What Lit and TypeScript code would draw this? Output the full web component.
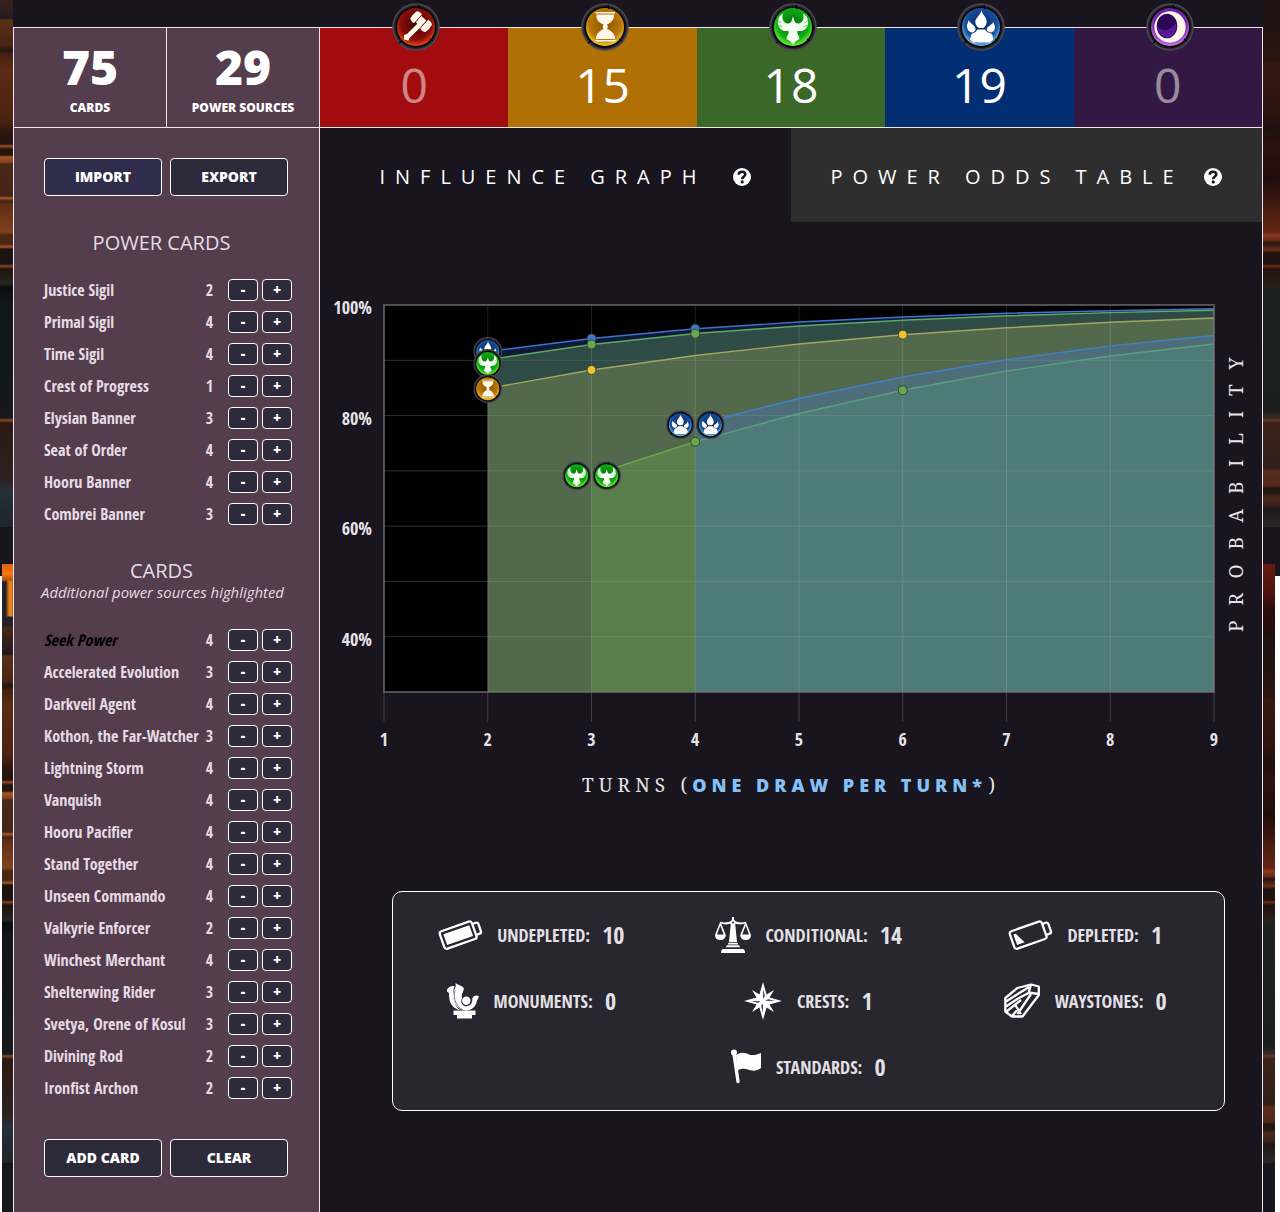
import { LitElement, html, svg, css } from "lit";
import { customElement, property } from "lit/decorators.js";

type Faction = "fire" | "time" | "justice" | "primal" | "shadow";

const ORB_COLORS: Record<Faction, [string, string, string]> = {
  fire: ["#ff4a22", "#8c0e08", "#3c0504"],
  time: ["#ffd23a", "#b87605", "#8a5200"],
  justice: ["#7dff3a", "#0fae14", "#066a0c"],
  primal: ["#7cccff", "#174f9c", "#08245c"],
  shadow: ["#e58cf8", "#6f22a8", "#3a0a66"],
};

const GLYPHS: Record<Faction, unknown> = {
  fire: svg`<g fill="#fff8ea">
    <path d="M26 20 L29.500 23.500 L19.500 33 L17.500 35 L16.500 37.500 L12 36.500 L12 32 L15 31 Z"/>
    <g transform="rotate(42 29.5 18.5)">
      <path d="M19 14 Q22 11.500 25 13 V24.500 Q22 26 19 23.500 Q18 19 19 14 Z M25.800 14.500 H32.500 V23 H25.800 Z M33.300 13 Q37 11.500 39.500 14 Q40.800 19 39.500 23.500 Q37 26 33.300 24.500 Z"/>
    </g></g>`,
  time: svg`<path fill="#fff8ea" d="M14.500 9 H34 V10.500 H14.500 Z M15.500 11.500 H33 C33.500 17 29 20.500 26 21.500 L27 24 L26 26 C31 28 34.500 32 34 36 H15 C14.800 32 18 28 22.500 26 L21.500 24 L22.500 21.500 C19 20.500 14.500 17 15.500 11.500 Z M14.500 37 H34.500 V38.500 H14.500 Z"/>`,
  justice: svg`<path fill="#f4fff0" d="M14 10.500 C9 13 7.500 20 10 24 C12 27.500 16 28.500 19.500 28 C20.500 31 17.500 33 17.500 36 L21 38 L24 41.500 L27 38 L30.500 36 C30.500 33 27.500 31 28.500 28 C32 28.500 36 27.500 38 24 C40.500 20 39 13 34 10.500 C35.500 14 34.500 19.500 30 20.500 C27.500 21 25.500 19.500 25.200 17 L24 13.500 L22.800 17 C22.500 19.500 20.500 21 18 20.500 C13.500 19.500 12.500 14 14 10.500 Z"/>
    <path fill="none" stroke="#18b51a" stroke-width=".7" d="M9 17.500 L12.500 20 M9.500 22.500 L13.500 23.500 M39 17.500 L35.500 20 M38.500 22.500 L34.500 23.500"/>`,
  primal: svg`<path fill="#fff" d="M24.500 7 C24.500 11 29.700 14 29.700 18.500 C29.700 22 28 23.500 26.500 25 H22 C19.500 23.500 18.200 21.500 18.300 18.500 C18.500 15 23.500 12 24.500 7 Z M11 17 C12.500 20 18.200 22 18.600 26 C18.600 27.500 17 29 15.500 29.500 C12 29 10 26.500 10 23 C10 20.500 11.500 20 11 17 Z M36.500 18.500 C36.200 20.500 38 21.500 38 24 C38 27.500 36 29 33.500 29.500 C31 29 29.500 28 29.800 26 C30.400 23 35.500 22 36.500 18.500 Z M18.500 29 L20.500 26.500 H28 L30 29 L35 31 L36.500 36 L33 39.500 H16 L13 36.500 L14.500 31 Z"/>`,
  shadow: svg`<circle cx="24" cy="24" r="15.700" fill="#fff6ea"/><ellipse cx="21" cy="23" rx="10.300" ry="12.300" fill="#2c0758"/><path d="M11 22 C14 30 24 29 30 20 C32 28 26 36 20.500 35 C14 33 11 28 11 22 Z" fill="#5a179a"/>`,
};

const orb = (kind: Faction) => {
  const [hi, mid, lo] = ORB_COLORS[kind];
  return svg`
    <defs><radialGradient id="g-${kind}" cx=".5" cy=".42" r=".6">
      <stop offset="0" stop-color="${lo}"/><stop offset=".7" stop-color="${mid}"/><stop offset="1" stop-color="${hi}"/>
    </radialGradient></defs>
    <circle cx="24" cy="24" r="23.800" fill="#4a4953"/>
    <circle cx="24" cy="24" r="22.300" fill="#2b2a31"/>
    <circle cx="24" cy="24" r="20.800" fill="#08080b"/>
    <circle cx="24" cy="24" r="19" fill="url(#g-${kind})"/>
    ${GLYPHS[kind]}
    <path d="M27 2 L28 6 M7 40 L10 38 M41 38 L38 36" stroke="#000" stroke-width="1.200"/>`;
};

@customElement("power-orb")
class PowerOrb extends LitElement {
  @property() kind: Faction = "fire";
  static styles = css`
    :host { display: block; width: 48px; height: 48px; }
    .orb { display: block; }
  `;
  render() {
    return html`<svg class="orb" width="48" height="48" viewBox="0 0 48 48">${orb(this.kind)}</svg>`;
  }
}

@customElement("influence-chart")
class InfluenceChart extends LitElement {
  static styles = css`
    :host { display: block; }
    .chart { display: block; }
    .tick { font: 700 18px "Open Sans Condensed", "Open Sans", sans-serif; font-stretch: 75%; fill: #e6e3e8; }
    .axis { font: 400 19px "Noto Serif", "Droid Serif", "DejaVu Serif Condensed", "DejaVu Serif", serif; fill: #e6e3e8; }
    .link { font: 800 18px "Open Sans", sans-serif; fill: #85c1f5; }
  `;

  render() {
    const x = (turn: number) => 384 + (turn - 1) * 103.75;
    const pts = (start: number, ys: number[]) => ys.map((y, i) => `${x(start + i)},${y}`);
    const area = (start: number, ys: number[], fill: string) =>
      svg`<polygon fill=${fill} points="${x(start)},692 ${pts(start, ys).join(" ")} 1214,692"/>`;
    const line = (start: number, ys: number[], stroke: string) =>
      svg`<polyline fill="none" stroke=${stroke} stroke-width="1.400" points=${pts(start, ys).join(" ")} />`;
    const dot = (turn: number, y: number, fill: string) =>
      svg`<circle cx=${x(turn)} cy=${y} r="4.500" fill=${fill} stroke="#33452f" stroke-width="1"/>`;
    const marker = (kind: Faction, cx: number, cy: number) =>
      svg`<svg x=${cx - 14.5} y=${cy - 14.5} width="29" height="29" viewBox="0 0 48 48">${orb(kind)}</svg>`;

    const primal1 = [351.5, 338.5, 328.7, 322, 317, 313.3, 310.7, 308.8];
    const justice1 = [359.8, 344.5, 333.5, 326, 320.2, 315.8, 312.6, 310.3];
    const time1 = [388.5, 370, 355.5, 344, 334.7, 327.8, 322.2, 318];
    const primal2 = [424.5, 398.5, 377, 359.7, 345.9, 335.5];
    const justice2 = [475.5, 441.7, 413.5, 390.2, 371, 356, 344];
    const turns = [1, 2, 3, 4, 5, 6, 7, 8, 9];
    const rows = [1, 2, 3, 4, 5, 6].map((i) => 305 + i * 55.286);

    return html`<svg class="chart" width="942" height="600" viewBox="320 222 942 600">
      <rect x="384" y="305" width="830" height="387" fill="#000"/>
      ${area(2, primal1, "#0e1b38")}
      ${area(2, justice1, "#2e4b46")}
      ${area(2, time1, "#526a4b")}
      ${area(3, justice2, "#5a7d4c")}
      ${area(4, primal2, "#4d6d79")}
      ${area(4, justice2.slice(1), "#4e7b77")}
      ${turns.map((t) => svg`<path d="M${x(t)} 305 V692" stroke="#fff" stroke-opacity=".13" stroke-width="1"/>
        <path d="M${x(t)} 692 V721.500" stroke="#fff" stroke-opacity=".18" stroke-width="1"/>`)}
      ${rows.map((y) => svg`<path d="M384 ${y} H1214" stroke="#fff" stroke-opacity=".1" stroke-width="1"/>
        <path d="M384 ${y} H487" stroke="#fff" stroke-opacity=".1" stroke-width="1"/>`)}
      ${line(2, primal1, "#3f74cc")}${line(2, justice1, "#63a860")}${line(2, time1, "#a3a663")}
      ${line(4, primal2, "#4080cc")}${line(3, justice2.slice(0, 2), "#6aa84f")}${line(4, justice2.slice(1), "#5c9f80")}
      <rect x="384" y="305" width="830" height="387" fill="none" stroke="#77777a" stroke-opacity=".8" stroke-width="1.600"/>
      ${dot(3, 338.5, "#3f74cc")}${dot(4, 328.7, "#3f74cc")}
      ${dot(3, 344.5, "#6aa84f")}${dot(4, 333.7, "#6aa84f")}
      ${dot(3, 370, "#f1c232")}${dot(6, 334.7, "#f1c232")}
      ${dot(4, 441.7, "#6aa84f")}${dot(6, 390.3, "#6aa84f")}
      ${marker("primal", 487.8, 351.5)}${marker("justice", 487.8, 363.5)}${marker("time", 487.8, 388.7)}
      ${marker("primal", 680.3, 424.7)}${marker("primal", 710.3, 424.7)}
      ${marker("justice", 576.7, 475.7)}${marker("justice", 606.7, 475.7)}
      ${[100, 80, 60, 40].map((v) => svg`<text class="tick" x="372" y=${314 + ((100 - v) / 10) * 55.286} text-anchor="end">${v}%</text>`)}
      ${turns.map((t) => svg`<text class="tick" x=${x(t)} y="746" text-anchor="middle">${t}</text>`)}
      <text class="axis" x="582" y="791.500" letter-spacing="4" textLength="109" lengthAdjust="spacing">TURNS (</text>
      <text class="link" x="692.300" y="791.500" textLength="289.500" lengthAdjust="spacing">ONE DRAW PER TURN*</text>
      <text class="axis" x="988.500" y="791.500">)</text>
      <text class="axis" transform="translate(1243 632) rotate(-90)" textLength="274.500" lengthAdjust="spacing">PROBABILITY</text>
    </svg>`;
  }
}

const battery = (full: boolean) => svg`<g transform="translate(-.5 -1) rotate(-19.500 22 18)">
  <rect x="2.400" y="9" width="34" height="18.500" rx="2.500" fill="none" stroke="#fff" stroke-width="2.300"/>
  <path d="M37.200 12.500 H40.200 Q42.200 12.500 42.200 14.500 V22 Q42.200 24 40.200 24 H37.200" fill="none" stroke="#fff" stroke-width="2.300"/>
  ${full ? svg`<rect x="5.700" y="12.600" width="27.500" height="11.400" fill="#fff"/>` : svg`<path d="M5.700 12.800 H8.200 L13.700 23.800 H5.700 Z" fill="#fff"/>`}
</g>`;

const STAT_ICONS: Record<string, { w: number; body: unknown }> = {
  undepleted: { w: 44, body: battery(true) },
  depleted: { w: 44, body: battery(false) },
  conditional: {
    w: 36,
    body: svg`<g fill="#fff"><path d="M17 0 H19 V2.500 L20.500 4.500 L20.300 8 L22 25 H14 L15.700 8 L15.500 4.500 L17 2.500 Z"/>
      <path d="M5 4.700 Q11 6.700 17 3.800 L18 6 Q11 8.700 5 6.300 Z M31 4.700 Q25 6.700 19 3.800 L18 6 Q25 8.700 31 6.300 Z"/>
      <path fill-rule="evenodd" d="M5.300 4.500 L10.800 18 Q10.500 23 5.300 23 Q0 23 0 18 Z M5.300 8.500 L2 17.500 H8.700 Z M30.700 4.500 L36 18 Q36 23 30.700 23 Q25.400 23 25.200 18 Z M30.700 8.500 L27.300 17.500 H34 Z"/>
      <path d="M13.500 25.800 H22.500 L23.200 27.500 H12.800 Z M12 28.300 H24 L25.200 30.300 H10.800 Z M8.500 32 H27.500 Q30 32 30 36 H6 Q6 32 8.500 32 Z"/></g>
      <circle cx="18" cy="5.500" r="1" fill="#28262f"/>`,
  },
  monuments: {
    w: 32,
    body: svg`<g fill="#fff"><path d="M7.500 3 C3 3 -.5 5 0 8.500 L2 10 C2 18 3 24 13 27.500 C6 21 4.500 12 7.500 3 Z"/>
      <path d="M8.500 0 C13 3 16.500 3 17 6 C16 9 14 12 15 15 C13 20 16 23.300 19.300 23.300 C24 23.300 25.500 19 25.300 15.500 C26 12 30 12 32 13 L31 16 C29 18 30 22 26 25 C23 28 16 28 13 26 C6 21 5 14 7 7 C8.500 5 9 3 8.500 0 Z"/>
      <circle cx="19.300" cy="17.800" r="4.200"/><path d="M6.500 27.500 H28.500 V32 H25 V35.500 H10 V32 H6.500 Z"/></g>
      <path d="M8 7 C6 17 9 23 16 27" fill="none" stroke="#28262f" stroke-width=".6"/>`,
  },
  crests: {
    w: 38,
    body: svg`<g transform="translate(0 -1)"><path fill="#fff" d="M19 0 L22.600 12.500 L30 8 L25.500 15.400 L38 19 L25.500 22.600 L30 30 L22.600 25.500 L19 38 L15.400 25.500 L8 30 L12.500 22.600 L0 19 L12.500 15.400 L8 8 L15.400 12.500 Z"/>
      <path d="M19.200 7 V17 L20.800 14 Z M7 19.200 H16.500 L14 20.800 Z M18.800 31 V21.500 L17.200 24 Z M31 18.800 H21.500 L24 17.200 Z" fill="#28262f"/></g>`,
  },
  waystones: {
    w: 36,
    body: svg`<path fill="none" stroke="#fff" stroke-width="2.300" stroke-linejoin="round" d="M1.300 15 L13.500 5 L27 1.500 L34.800 3.500 V12 L18.500 33.500 H8 L1.300 28.500 Z M1.300 24 L14 15.500 L24.500 10 L27 1.500 M24.500 9.500 L34.800 11 M2 18.500 L25 4 M2.500 28.500 L17 17 M8 33 L14 26 M13.500 31 L27 11 M11 21.500 L17 31"/>`,
  },
  standards: {
    w: 30,
    body: svg`<g fill="#fff"><circle cx="3" cy="3.500" r="3"/><path d="M1.200 4 H4.800 L8.700 33 Q7.500 35 5.500 33.500 Z"/>
      <path d="M5 6 C10 2.500 14 3.500 18 5.500 C22 7 26 5.500 30 4 V19 C25 23 20 21.500 17 20.500 C13 19 9 19.500 6.500 21.500 Z"/></g>`,
  },
};

const POWER_CARDS: [string, number][] = [
  ["Justice Sigil", 2], ["Primal Sigil", 4], ["Time Sigil", 4], ["Crest of Progress", 1],
  ["Elysian Banner", 3], ["Seat of Order", 4], ["Hooru Banner", 4], ["Combrei Banner", 3],
];

const CARDS: [string, number][] = [
  ["Seek Power", 4], ["Accelerated Evolution", 3], ["Darkveil Agent", 4], ["Kothon, the Far-Watcher", 3],
  ["Lightning Storm", 4], ["Vanquish", 4], ["Hooru Pacifier", 4], ["Stand Together", 4],
  ["Unseen Commando", 4], ["Valkyrie Enforcer", 2], ["Winchest Merchant", 4], ["Shelterwing Rider", 3],
  ["Svetya, Orene of Kosul", 3], ["Divining Rod", 2], ["Ironfist Archon", 2],
];

const FACTIONS: [Faction, number][] = [["fire", 0], ["time", 15], ["justice", 18], ["primal", 19], ["shadow", 0]];

const STATS: [string, number][][] = [
  [["undepleted", 10], ["conditional", 14], ["depleted", 1]],
  [["monuments", 0], ["crests", 1], ["waystones", 0]],
  [["standards", 0]],
];

@customElement("app-root")
class AppRoot extends LitElement {
  static styles = css`
    :host { display: block; width: 1280px; height: 1212px; overflow: hidden; background: #18151e; color: #fff; font-family: "Open Sans", sans-serif; }
    * { box-sizing: border-box; }
    .page { display: grid; grid-template-columns: 13px 1250px 17px; height: 1212px; }
    .backdrop { display: flex; flex-direction: column; }
    .gap { height: 37px; }
    .hall { height: 527px; }
    .crown { height: 72px; }
    .low { flex: 1; display: flex; flex-direction: column; background-color: #fff; background-image: linear-gradient(#18151e, #18151e); background-repeat: no-repeat; }
    .rest { flex: 1; background: #18151e; }
    .left .hall { background: linear-gradient(#3a2018 0, #2a1d22 14px, #1e1820 18px, #5b3018 20px, #4a2412 45px, #241410 50px, #47200f 54px, #5b2a14 70px, #4c220f 120px, #26140f 135px, #26140f 144px, #a04d24 146px, #24150e 149px, #24150e 155px, #a85528 157px, #8a421b 162px, #4a2818 164px, #452416 196px, #b0582a 198px, #3f2213 201px, #5e2d16 204px, #82421c 232px, #4a2512 235px, #4a2512 244px, #a8552a 247px, #1e120d 249px, #191413 264px, #8a4420 266px, #20140f 269px, #282420 284px, #0a0d0f 287px, #10161a 300px, #15191c 418px, #8a4a28 420px, #2c1813 423px, #2d2220 480px, #253039 490px, #1d252c 527px); }
    .left .low { padding-left: 2px; background-size: 2px 12px; }
    .left .crown { background: linear-gradient(#e65e0c 0, #f07a12 10px, #c4520c 16px, transparent 18px, transparent 52px, #252029 53px, #252029 62px, #4a2818 64px, #3a2018 72px), linear-gradient(90deg, #23222c 4px, #c8640f 6px, #f39a1a 9px, #b4530f 11px); }
    .right .hall { background: linear-gradient(#1c1210 0, #2a1410 60px, #35170f 64px, #2e140f 110px, #200f0d 128px, #2a1210 145px, #200d0b 180px, #3a160f 200px, #52200f 215px, #622612 232px, #8a3a1e 235px, #702a16 240px, #25120e 243px, #6a3018 250px, #20120e 253px, #20120e 264px, #6b2f18 266px, #20120e 269px, #2a1f1a 285px, #1c2220 290px, #1b1e1c 410px, #3a2a22 418px, #5f3a28 420px, #3a2219 423px, #30201a 468px, #5a2d1d 471px, #522818 486px, #1f1513 488px, #2a1a15 494px, #4d291c 497px, #3a211a 505px, #201818 508px, #2a2727 527px); }
    .right .low { padding-right: 5px; background-size: 5px 12px; background-position: right top; }
    .right .crown { background: linear-gradient(#661c12, #4a130e 30px, #2a0d0b 46px, #200d0b); }

    .shell { display: flex; flex-direction: column; padding-top: 27px; background: #18151e; }
    .board { flex: 1; display: flex; flex-direction: column; border: 1px solid #efe9ef; border-bottom: 0; }
    .top { display: grid; grid-template-columns: 306px 942px; height: 100px; border-bottom: 1px solid #efe9ef; }
    .totals { display: grid; grid-template-columns: 153px 153px; background: #543e4e; }
    .total { display: flex; flex-direction: column; align-items: center; border-right: 1px solid #efe9ef; padding-top: 12px; }
    .total-n { font-size: 48px; font-weight: 800; line-height: 54px; }
    .total-l { font-size: 12px; font-weight: 800; line-height: 18px; margin-top: 5px; }
    .factions { display: grid; grid-template-columns: repeat(5, 1fr); }
    .faction { display: flex; flex-direction: column; align-items: center; font-size: 48px; line-height: 66px; }
    .faction power-orb { margin: -25px 0 1px 4px; }
    .fire { background: #a20c0f; } .time { background: #b07003; } .justice { background: #3b6828; } .primal { background: #022f73; } .shadow { background: #331843; }
    .none { opacity: .5; }

    .body { flex: 1; display: grid; grid-template-columns: 306px 942px; }
    .side { background: #543e4e; border-right: 1px solid #efe9ef; padding: 30px 0 0 30px; }
    .pair { display: flex; gap: 8px; }
    .big { width: 118px; height: 38px; padding: 0 0 2px; border: 1px solid #fff; border-radius: 4px; background: #2d2b3b; color: #fff; font: 800 14px "Open Sans", sans-serif; }
    .big.active { background: #302c4c; }
    .title { margin: 0; width: 235px; text-align: center; font-size: 20px; font-weight: 400; line-height: 26px; color: #e6dbe5; }
    .title.powers { margin-top: 34px; margin-bottom: 18px; }
    .title.others { margin-top: 28px; }
    .sub { margin: -3px 0 21px -11px; width: 259px; text-align: center; font-size: 14.900px; font-style: italic; line-height: 22px; color: #e6dbe5; }
    .row { display: grid; grid-template-columns: 155px 21px 8px 30px 4px 30px; height: 32px; align-items: center; font: 700 16px "Open Sans Condensed", "Open Sans", sans-serif; font-stretch: 75%; color: #e6dbe5; white-space: nowrap; }
    .count { text-align: center; }
    .small { width: 30px; height: 22px; padding: 0; border: 1px solid #fff; border-radius: 4px; background: #2d2b3b; color: #fff; font: 800 14px/18px "Open Sans", sans-serif; }
    .extra { color: #000; font-style: italic; }
    .pair.last { margin-top: 35px; }

    .tabs { display: grid; grid-template-columns: 471px 471px; height: 94px; }
    .tab { display: flex; align-items: center; justify-content: space-between; padding: 4px 40px 0 59.5px; font-size: 20px; font-weight: 400; line-height: 26px; white-space: nowrap; }
    .tab.off { background: #2e2e2e; padding-left: 39.5px; }
    .tab-text { letter-spacing: 9.97px; }
    .help { display: block; }
    .stats { margin: 69px 0 0 72px; width: 833px; height: 220px; padding: 10px 0; border: 1px solid #fff; border-radius: 10px; background: #28262f; font: 700 18px "Open Sans Condensed", "Open Sans", sans-serif; font-stretch: 75%; color: #e3e1e5; }
    .stat-row { display: flex; height: 66px; justify-content: center; }
    .stat { width: 277px; display: flex; align-items: center; justify-content: center; }
    .stat-label { margin: 0 12px 0 14.5px; text-transform: uppercase; }
    .stat-value { font-size: 24px; padding-bottom: 1.500px; }
    .stat-icon { display: block; overflow: visible; }
  `;

  private row([name, count]: [string, number]) {
    return html`<div class="row">
      <span class=${name === "Seek Power" ? "extra" : "name"}>${name}</span><span class="count">${count}</span><span></span>
      <button class="small">-</button><span></span><button class="small">+</button>
    </div>`;
  }

  private help() {
    return html`<svg class="help" width="18" height="18" viewBox="0 0 18 18"><circle cx="9" cy="9" r="9" fill="#fff"/>
      <path d="M5.700 6.800 C5.700 2.600 12.500 2.800 12.300 6.500 C12.200 8.500 9.200 8.600 9.200 11.200" fill="none" stroke="#18151e" stroke-width="2.600"/><circle cx="9.200" cy="13.900" r="1.600" fill="#18151e"/></svg>`;
  }

  private backdrop(side: string) {
    return html`<div class="backdrop ${side}"><div class="hall"></div><div class="gap"></div>
      <div class="low"><div class="crown"></div><div class="hall"></div><div class="rest"></div></div></div>`;
  }

  render() {
    return html`<div class="page">
      ${this.backdrop("left")}
      <div class="shell"><div class="board">
        <header class="top">
          <div class="totals">
            <div class="total"><span class="total-n">75</span><span class="total-l">CARDS</span></div>
            <div class="total"><span class="total-n">29</span><span class="total-l">POWER SOURCES</span></div>
          </div>
          <div class="factions">${FACTIONS.map(([k, n]) => html`<div class="faction ${k}"><power-orb kind=${k}></power-orb><span class=${n ? "some" : "none"}>${n}</span></div>`)}</div>
        </header>
        <div class="body">
          <aside class="side">
            <div class="pair"><button class="big active">IMPORT</button><button class="big">EXPORT</button></div>
            <h2 class="title powers">POWER CARDS</h2>
            ${POWER_CARDS.map((c) => this.row(c))}
            <h2 class="title others">CARDS</h2>
            <p class="sub">Additional power sources highlighted</p>
            ${CARDS.map((c) => this.row(c))}
            <div class="pair last"><button class="big">ADD CARD</button><button class="big">CLEAR</button></div>
          </aside>
          <main>
            <nav class="tabs">
              <div class="tab"><span class="tab-text">INFLUENCE GRAPH</span>${this.help()}</div>
              <div class="tab off"><span class="tab-text">POWER ODDS TABLE</span>${this.help()}</div>
            </nav>
            <influence-chart></influence-chart>
            <section class="stats">${STATS.map((r) => html`<div class="stat-row">${r.map(([k, n]) => html`<div class="stat">
              <svg class="stat-icon" width=${STAT_ICONS[k].w} height="36" viewBox="0 0 ${STAT_ICONS[k].w} 36">${STAT_ICONS[k].body}</svg>
              <span class="stat-label">${k}:</span><span class="stat-value">${n}</span></div>`)}</div>`)}</section>
          </main>
        </div>
      </div></div>
      ${this.backdrop("right")}
    </div>`;
  }
}
